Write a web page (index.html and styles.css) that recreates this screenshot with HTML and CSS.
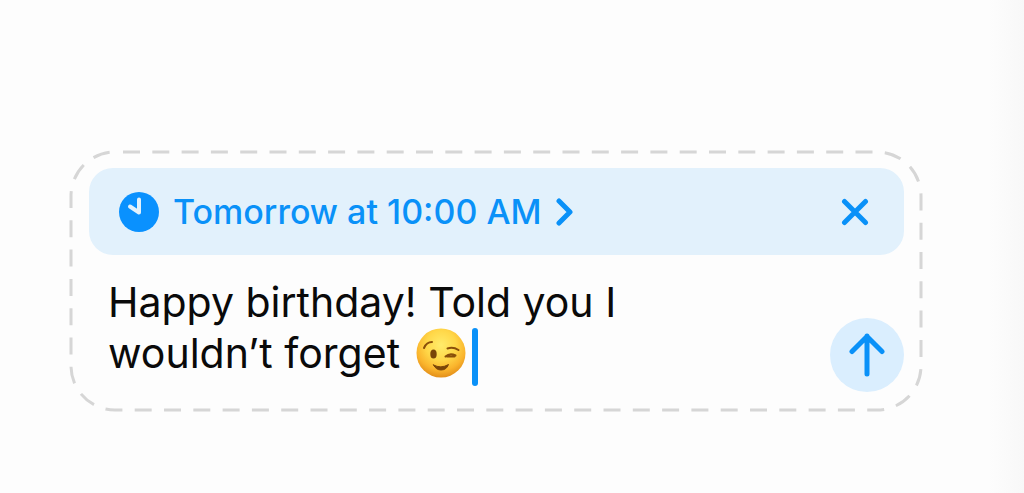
FILE: index.html
```html
<!DOCTYPE html>
<html lang="en">
<head>
  <meta charset="UTF-8" />
  <meta name="viewport" content="width=device-width, initial-scale=1.0"/>
  <title>Send Later</title>
  <link rel="stylesheet" href="styles.css">
</head>
<body>

  <form class="composer">
    <!-- Dashed outline -->
    <svg class="outline" aria-hidden="true">
      <rect x="1" y="2" rx="44" ry="44" />
    </svg>

    <!-- Scheduled time -->
    <div class="schedule">
      <button type="button" class="schedule-time">
        <svg class="clock" viewBox="0 0 40 40" aria-hidden="true">
          <circle cx="20" cy="20" r="20" />
          <path d="M20 7.5V20.5L11 14.5" />
        </svg>
        <span>Tomorrow at 10:00 AM</span>
        <svg class="chevron" viewBox="0 0 18 28" aria-hidden="true">
          <path d="M3 3L14 14L3 25" />
        </svg>
      </button>
      <button type="button" class="close-button" aria-label="Cancel schedule">
        <svg viewBox="0 0 28 28" aria-hidden="true">
          <path d="M3.500 3.500L24.500 24.500M24.500 3.500L3.500 24.500" />
        </svg>
      </button>
    </div>

    <!-- Message -->
    <div class="message">
      <div class="message-field">
        <textarea class="message-text" rows="2" aria-label="Message">Happy birthday! Told you I wouldn’t forget</textarea>
        <div class="message-end">
          <svg class="emoji" viewBox="0 0 50 50" role="img" aria-label="Winking face">
            <defs>
              <radialGradient id="face" cx="50%" cy="34%" r="68%">
                <stop offset="0" stop-color="#ffec6b" />
                <stop offset="0.45" stop-color="#ffd748" />
                <stop offset="0.75" stop-color="#fab42c" />
                <stop offset="1" stop-color="#e08a18" />
              </radialGradient>
            </defs>
            <circle cx="25" cy="25" r="24.5" fill="url(#face)" />
            <ellipse cx="17.5" cy="26" rx="3.2" ry="4.6" fill="#7a4508" />
            <g fill="none" stroke="#8a4f0a" stroke-width="2" stroke-linecap="round">
              <path d="M8 20Q10.500 14 16 14" />
              <path d="M31.500 20.500Q37 18.500 42.500 22" />
              <path d="M29.500 28.500Q34 24.500 39.500 27.500M31 28.500L38.500 28.500" />
            </g>
            <path d="M17.500 37Q25 41 32.500 36.500Q30.500 42 25 42Q20 42 17.500 37Z" fill="#7a4508" stroke="#7a4508" />
          </svg>
          <span class="caret"></span>
        </div>
      </div>
      <button type="submit" class="send-button" aria-label="Send">
        <svg viewBox="0 0 36 44" aria-hidden="true">
          <path d="M18 41V3M3 18.500L18 3.500L33 18.500" />
        </svg>
      </button>
    </div>
  </form>

</body>
</html>
```
FILE: styles.css
```css
* {
  box-sizing: border-box;
}

body {
  margin: 0;
  min-height: 100vh;
  padding: 150px 101px 80px 70px;
  font-family: Inter, "Liberation Sans", sans-serif;
  background: linear-gradient(to left, #f8f8f8, #fdfdfd 36px);
}

button {
  padding: 0;
  border: none;
  background: none;
  font: inherit;
  color: #0a91f8;
  cursor: pointer;
}

svg {
  display: block;
  flex: none;
}

svg path {
  stroke-linecap: round;
  stroke-linejoin: round;
}

.composer {
  position: relative;
  padding: 18px 19px 20px 19px;
}

.outline {
  position: absolute;
  top: 0;
  left: 0;
  width: 100%;
  height: 100%;
  overflow: visible;
  pointer-events: none;
}

.outline rect {
  width: calc(100% - 3px);
  height: calc(100% - 4px);
  fill: none;
  stroke: #d6d6d6;
  stroke-width: 3;
  stroke-dasharray: 17 12.3;
  stroke-dashoffset: -8;
}

/* Schedule bar */
.schedule {
  display: flex;
  align-items: center;
  justify-content: space-between;
  height: 87px;
  padding: 0 35px 0 30px;
  border-radius: 24px;
  background-color: #e2f1fc;
}

.schedule-time {
  display: flex;
  align-items: center;
  gap: 14px;
  font-size: 34px;
  font-weight: 500;
  line-height: 40px;
}

.clock {
  width: 40px;
  height: 40px;
  fill: #0a91fe;
}

.clock path {
  fill: none;
  stroke: #e2f1fc;
  stroke-width: 4;
}

.chevron {
  width: 18px;
  height: 28px;
}

.close-button svg {
  width: 28px;
  height: 28px;
}

.chevron,
.close-button svg,
.send-button svg {
  fill: none;
  stroke: #0a91f8;
  stroke-width: 5;
}

/* Message row */
.message {
  display: flex;
  align-items: flex-end;
  justify-content: space-between;
  padding-top: 22px;
}

.message-field {
  position: relative;
  flex: 0 1 540px;
  padding: 0 0 11px 19px;
}

.message-text {
  display: block;
  width: 100%;
  height: 104px;
  padding: 0;
  border: none;
  outline: none;
  resize: none;
  overflow: hidden;
  background: none;
  font-family: inherit;
  font-size: 41px;
  line-height: 51px;
  color: #0a0a0a;
}

.message-end {
  position: absolute;
  left: 327px;
  bottom: 6px;
  display: flex;
  align-items: flex-start;
  gap: 6px;
}

.emoji {
  width: 50px;
  height: 50px;
}

.caret {
  width: 6px;
  height: 58px;
  border-radius: 3px;
  background-color: #0a91f8;
}

.send-button {
  display: flex;
  align-items: center;
  justify-content: center;
  width: 74px;
  height: 74px;
  border-radius: 50%;
  background-color: #daeefe;
}

.send-button svg {
  width: 36px;
  height: 44px;
}
```
